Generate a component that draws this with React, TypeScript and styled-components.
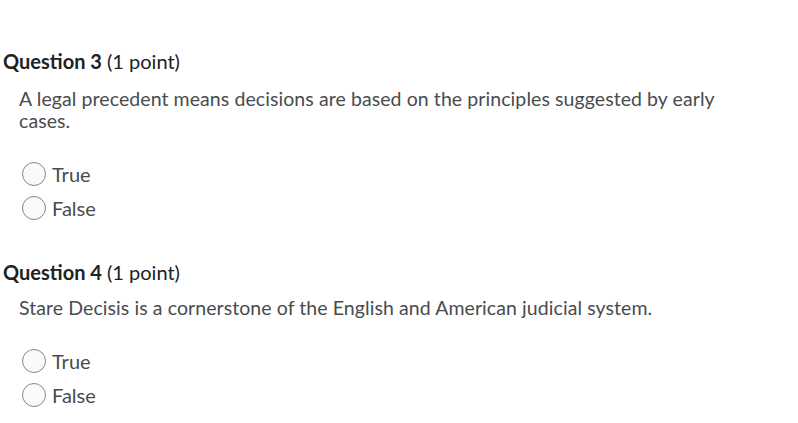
import styled, { createGlobalStyle } from 'styled-components';

const GlobalStyle = createGlobalStyle`
  body {
    margin: 0;
    background: #fff;
    font-family: Lato, "Noto Sans", sans-serif;
    color: #494c4e;
  }
`;

const Page = styled.div`
  padding: 47px 0 0 3px;
`;

const Question = styled.section`
  margin-bottom: 38px;
  &:last-child {
    margin-bottom: 0;
  }
`;

const Title = styled.h2`
  margin: 0;
  font-size: 20px;
  line-height: 28px;
  font-weight: 400;
  color: #202122;
  b {
    font-weight: 700;
  }
`;

const Prompt = styled.p<{ $gap: number }>`
  margin: ${p => p.$gap}px 0 0 16px;
  max-width: 720px;
  font-size: 19.5px;
  line-height: 22px;
  letter-spacing: 0.08px;
`;

const Options = styled.div`
  margin: 30px 0 0 19px;
  display: flex;
  flex-direction: column;
  gap: 10px;
`;

const Option = styled.label`
  display: flex;
  align-items: center;
  gap: 6px;
  font-size: 20px;
  line-height: 24px;
`;

const Radio = styled.span`
  width: 22px;
  height: 22px;
  border-radius: 50%;
  border: 1px solid #868686;
  background: #f9fafb;
`;

const questions = [
  {
    n: 3,
    text: 'A legal precedent means decisions are based on the principles suggested by early cases.',
    gap: 13,
  },
  {
    n: 4,
    text: 'Stare Decisis is a cornerstone of the English and American judicial system.',
    gap: 11,
  },
];

export default function App() {
  return (
    <Page>
      <GlobalStyle />
      {questions.map(q => (
        <Question key={q.n}>
          <Title>
            <b>Question {q.n}</b> (1 point)
          </Title>
          <Prompt $gap={q.gap}>{q.text}</Prompt>
          <Options>
            <Option><Radio />True</Option>
            <Option><Radio />False</Option>
          </Options>
        </Question>
      ))}
    </Page>
  );
}
